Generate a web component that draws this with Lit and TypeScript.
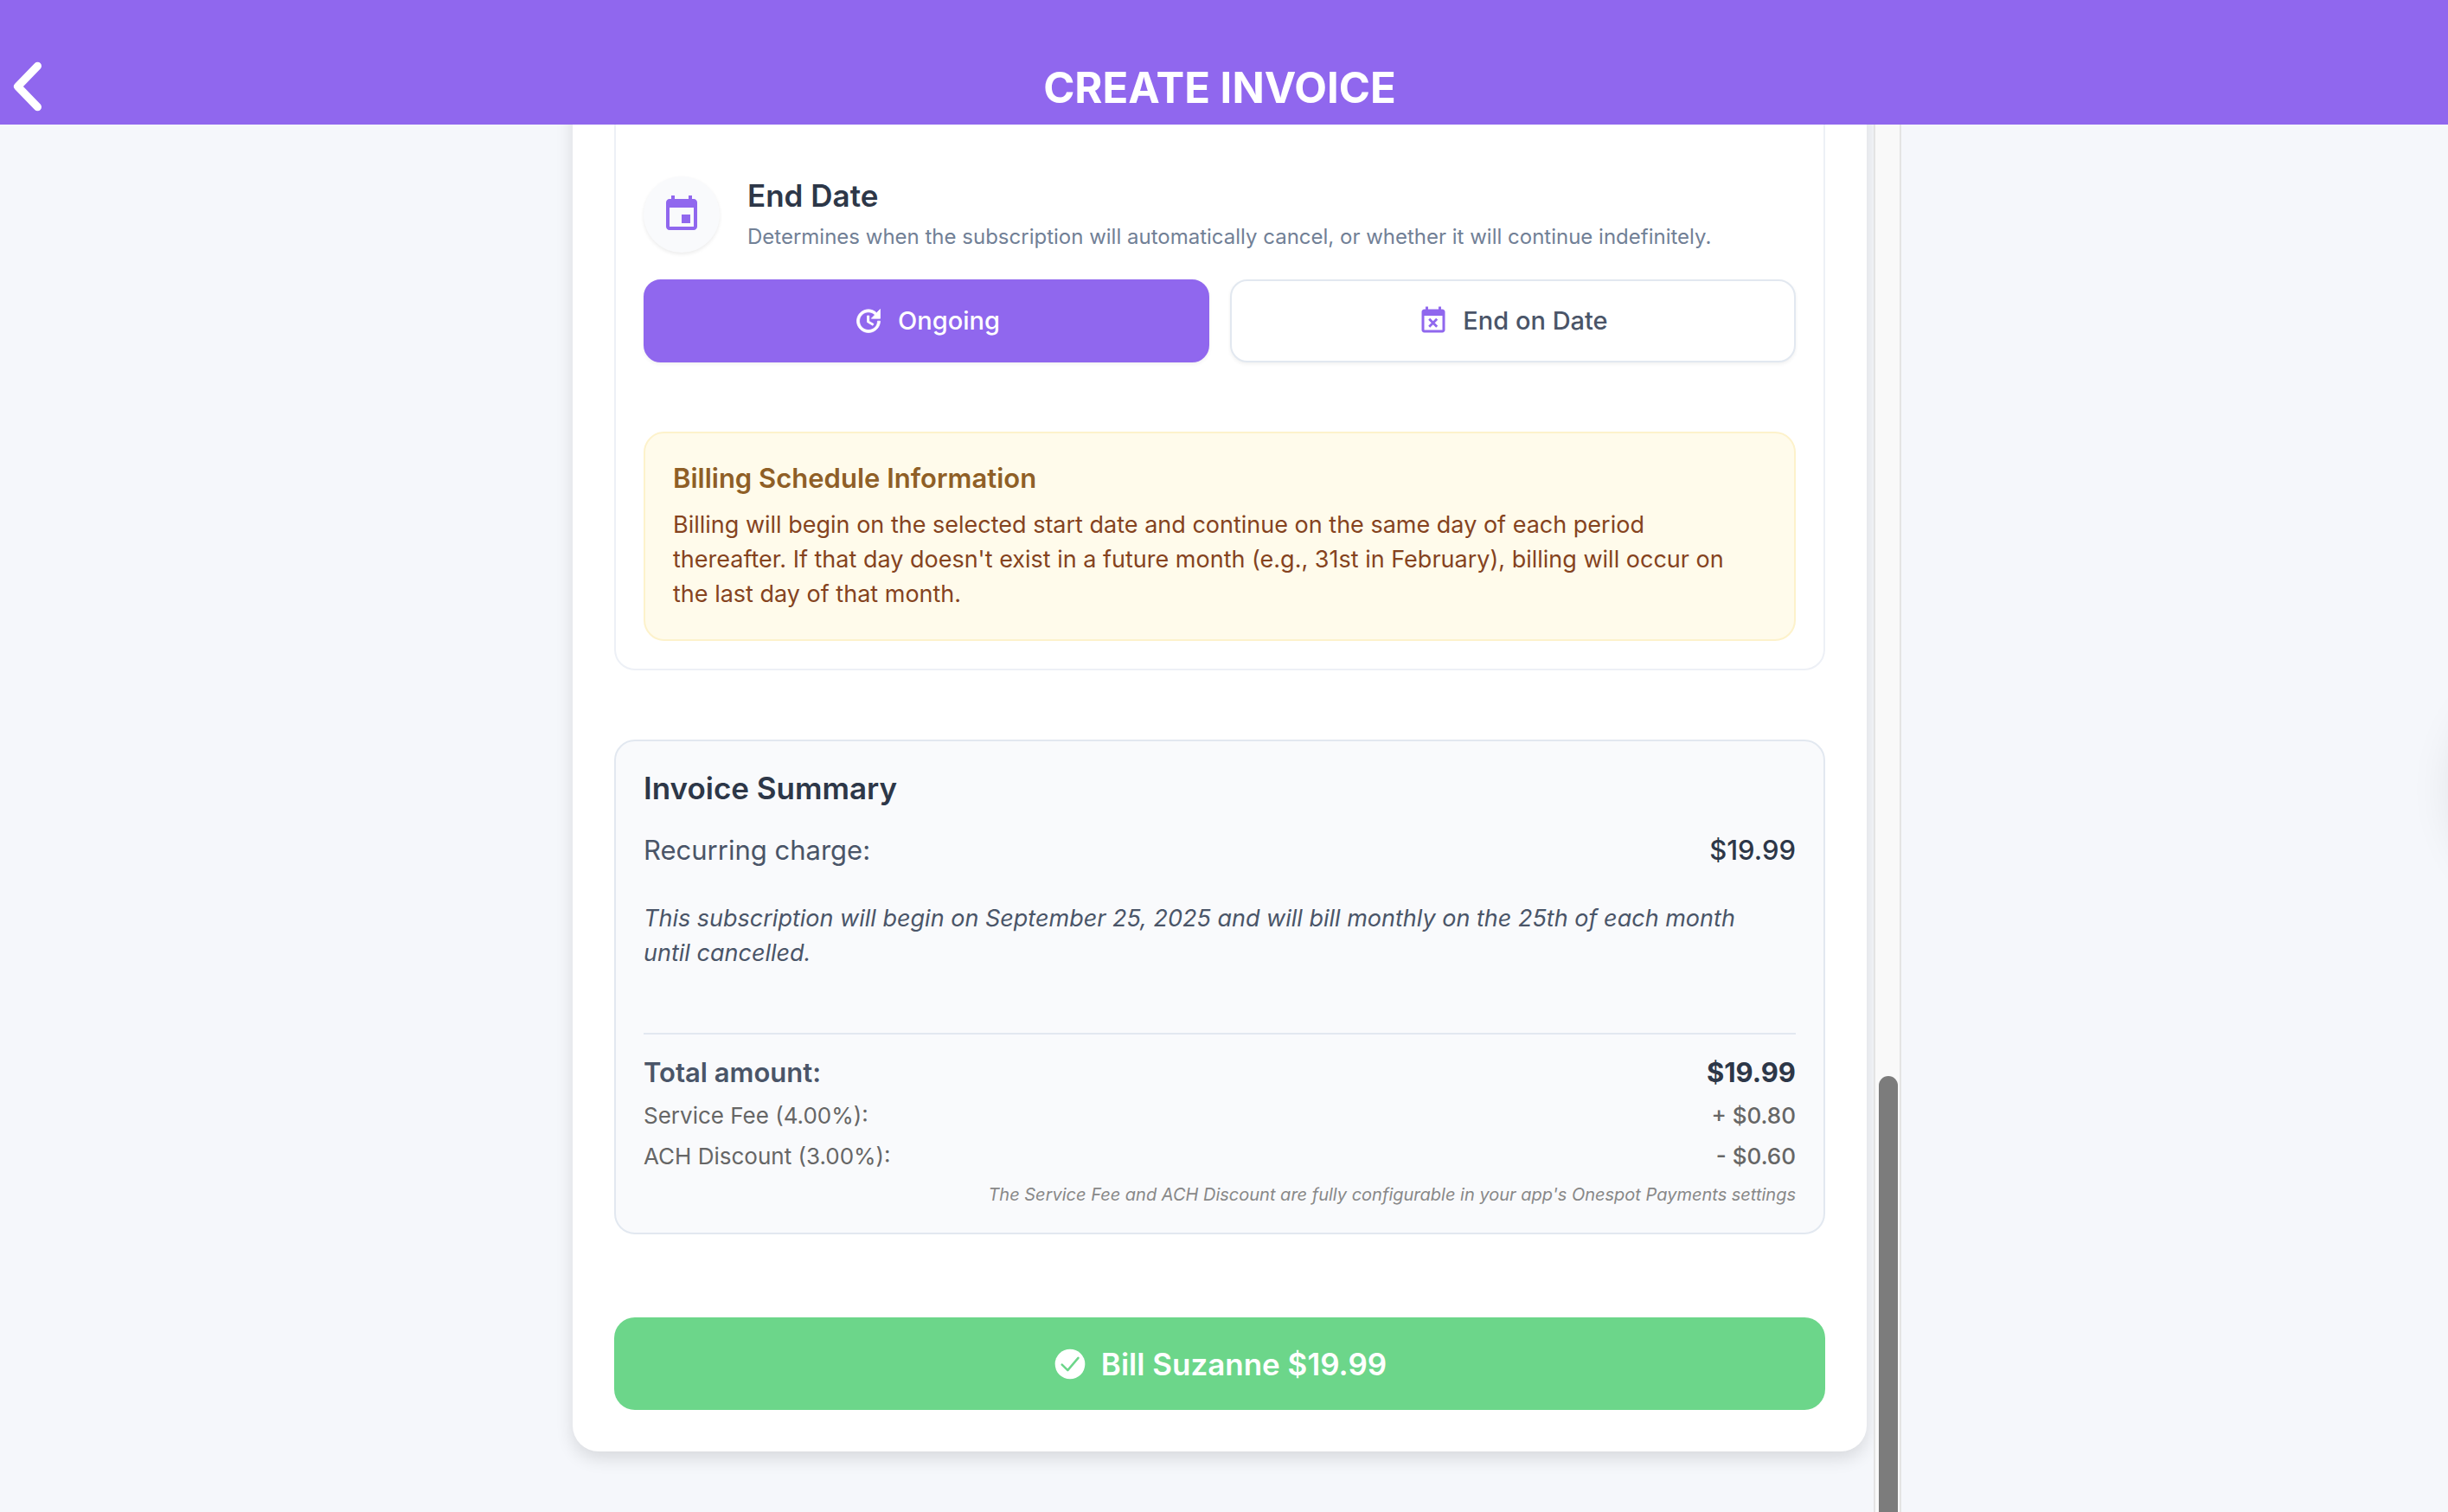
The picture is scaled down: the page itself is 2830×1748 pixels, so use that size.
import { LitElement, html, css, svg } from "lit";
import { customElement, property, state } from "lit/decorators.js";

const ICONS: Record<string, unknown> = {
  event: svg`<path fill="currentColor" d="M17 12h-5v5h5v-5zM16 1v2H8V1H6v2H5c-1.11 0-1.99.9-1.99 2L3 19c0 1.1.89 2 2 2h14c1.1 0 2-.9 2-2V5c0-1.1-.9-2-2-2h-1V1h-2zm3 18H5V8h14v11z"/>`,
  update: svg`<path fill="currentColor" stroke="currentColor" stroke-width=".5" d="M21 10.12h-6.78l2.74-2.82c-2.73-2.7-7.15-2.8-9.88-.1-2.73 2.71-2.73 7.08 0 9.79s7.15 2.71 9.88 0C18.32 15.65 19 14.08 19 12.1h2c0 1.98-.88 4.55-2.64 6.29-3.51 3.48-9.21 3.48-12.72 0-3.5-3.47-3.53-9.11-.02-12.58s9.14-3.47 12.65 0L21 3v7.12zM12.5 8v4.25l3.5 2.08-.72 1.21L11 13V8h1.5z"/>`,
  busy: svg`<path fill="currentColor" d="M19 3h-1V1h-2v2H8V1H6v2H5c-1.11 0-1.99.9-1.99 2L3 19c0 1.1.89 2 2 2h14c1.1 0 2-.9 2-2V5c0-1.1-.9-2-2-2zm0 16H5V8h14v11z"/><path fill="none" stroke="currentColor" stroke-width="1.9" d="M8.8 10.5l6 6M14.8 10.5l-6 6"/>`,
  check: svg`<circle cx="12" cy="12" r="10.4" fill="currentColor"/><path fill="none" stroke="#6cd68a" stroke-width="1.5" stroke-linecap="round" stroke-linejoin="round" d="M6.4 12.4l4 3.9 7.3-8.6"/>`,
  back: svg`<path fill="none" stroke="currentColor" stroke-width="3.6" stroke-linecap="round" stroke-linejoin="round" d="M17.4 2.5L8.2 12l9.2 9.5"/>`,
};

@customElement("ui-icon")
class UiIcon extends LitElement {
  @property() name = "event";

  static styles = css`
    :host {
      display: block;
      flex: none;
      width: 36px;
      height: 36px;
    }
    .glyph {
      display: block;
      width: 100%;
      height: 100%;
    }
  `;

  render() {
    return html`<svg class="glyph" viewBox="0 0 24 24" aria-hidden="true">${ICONS[this.name]}</svg>`;
  }
}

@customElement("app-root")
class AppRoot extends LitElement {
  @state() private ending: "ongoing" | "date" = "ongoing";

  static styles = css`
    :host {
      display: flex;
      flex-direction: column;
      height: 100vh;
      overflow: hidden;
      position: relative;
      background: #f5f7fb;
      color: #2d3748;
      font-family: Inter, "Liberation Sans", sans-serif;
      font-size: 27px;
      line-height: 40px;
    }
    * {
      box-sizing: border-box;
    }
    h1,
    h2,
    h3,
    p,
    dl,
    dd {
      margin: 0;
    }
    button {
      font: inherit;
      cursor: pointer;
    }
    .bar {
      flex: none;
      display: grid;
      grid-template-columns: 64px 1fr 64px;
      align-items: center;
      height: 144px;
      padding: 56px 10px 0 0;
      background: #9067ee;
      color: #fff;
      z-index: 1;
    }
    .back {
      display: flex;
      padding: 0;
      border: 0;
      background: none;
      color: inherit;
    }
    .back ui-icon {
      width: 60px;
      height: 60px;
    }
    .bar h1 {
      padding-top: 4px;
      font-size: 49px;
      line-height: 60px;
      font-weight: 700;
      text-align: center;
    }
    .body {
      flex: 1;
      min-height: 0;
      display: grid;
      grid-template-columns: 1fr minmax(0, 1496px) 1fr;
      grid-template-rows: minmax(0, 1fr);
      padding-right: 10px;
    }
    .card {
      grid-column: 2;
      align-self: start;
      margin-top: -40px;
      padding: 40px 48px 48px;
      border-radius: 0 0 30px 30px;
      background: #fff;
      box-shadow: 0 8px 20px rgba(0, 0, 0, 0.12);
    }
    .schedule {
      padding: 60px 32px 32px;
      border: 2px solid #edf0f6;
      border-top: 0;
      border-radius: 0 0 24px 24px;
    }
    .intro {
      display: flex;
      align-items: center;
      gap: 32px;
    }
    .badge {
      flex: none;
      display: grid;
      place-items: center;
      width: 88px;
      height: 88px;
      border-radius: 50%;
      background: #f9fafc;
      color: #9067ee;
      box-shadow: 0 2px 4px rgba(0, 0, 0, 0.08);
    }
    .badge ui-icon {
      width: 48px;
      height: 48px;
    }
    .heading {
      font-size: 35px;
      line-height: 44px;
      font-weight: 600;
    }
    .hint {
      margin-top: 8px;
      font-size: 24px;
      line-height: 36px;
      color: #718096;
    }
    .choices {
      display: grid;
      grid-template-columns: 1fr 1fr;
      gap: 24px;
      margin-top: 31px;
    }
    .choice {
      display: flex;
      align-items: center;
      justify-content: center;
      gap: 16px;
      height: 96px;
      padding: 0 24px;
      border: 2px solid #e2e8f0;
      border-radius: 20px;
      background: #fff;
      color: #4a5568;
      font-size: 29px;
      font-weight: 500;
      box-shadow: 0 2px 4px rgba(0, 0, 0, 0.06);
    }
    .choice ui-icon {
      color: #9067ee;
    }
    .choice.on,
    .choice.on ui-icon {
      border-color: #9067ee;
      background: #9067ee;
      color: #fff;
    }
    .notice {
      margin-top: 80px;
      padding: 32px;
      border: 2px solid #fdf2cb;
      border-radius: 24px;
      background: #fffbeb;
      color: #85431e;
    }
    .notice h3 {
      margin-bottom: 14px;
      font-size: 31px;
      font-weight: 600;
      color: #8f5f26;
    }
    .notice p,
    .terms {
      padding-right: 20px;
    }
    .summary {
      margin-top: 80px;
      padding: 32px;
      border: 2px solid #e2e8f0;
      border-radius: 24px;
      background: #f9fafc;
    }
    .line {
      display: flex;
      justify-content: space-between;
      font-size: 26px;
      line-height: 40px;
      color: #666;
    }
    .line dd {
      font-weight: 500;
    }
    .line.charge {
      margin-top: 30px;
      font-size: 31px;
      color: #4a5568;
    }
    .line.charge dd,
    .line.total dd {
      color: #2d3748;
    }
    .line.total {
      font-size: 31px;
      line-height: 46px;
      font-weight: 600;
    }
    .line.total dt {
      color: #4a5568;
    }
    .line.total dd {
      font-weight: 700;
    }
    .terms {
      margin-top: 39px;
      font-style: italic;
      color: #4a5568;
    }
    .totals {
      display: grid;
      gap: 7px;
      margin-top: 72px;
      padding-top: 21px;
      border-top: 2px solid #e2e8f0;
    }
    .note {
      margin-top: 12px;
      font-size: 20px;
      line-height: 24px;
      font-style: italic;
      text-align: right;
      color: #888;
    }
    .submit {
      display: flex;
      align-items: center;
      justify-content: center;
      gap: 16px;
      width: 100%;
      height: 107px;
      margin-top: 96px;
      border: 0;
      border-radius: 24px;
      background: #6cd68a;
      color: #fff;
      font-size: 35px;
      font-weight: 600;
    }
    .submit ui-icon {
      width: 40px;
      height: 40px;
    }
    .track {
      grid-column: 3;
      display: flex;
      flex-direction: column;
      justify-content: flex-end;
      width: 32px;
      margin-left: 8px;
      padding: 0 2px 0 4px;
      border: solid #e4e4e4;
      border-width: 0 2px;
      background: #f9f9f9;
      z-index: 1;
    }
    .thumb {
      height: 31.4%;
      border-radius: 11px 11px 0 0;
      background: #7c7c7c;
    }
    .bubble {
      position: absolute;
      top: calc(50% - 92px);
      right: -267px;
      width: 260px;
      height: 260px;
      border-radius: 50%;
      background: #fff;
      box-shadow: 0 0 52px rgba(0, 0, 0, 0.1);
    }
  `;

  render() {
    const on = (v: string) => (this.ending === v ? "choice on" : "choice");
    return html`
      <header class="bar">
        <button class="back" aria-label="Back"><ui-icon name="back"></ui-icon></button>
        <h1>CREATE INVOICE</h1>
      </header>
      <main class="body">
        <div class="card">
          <section class="schedule">
            <div class="intro">
              <div class="badge"><ui-icon name="event"></ui-icon></div>
              <div>
                <h2 class="heading">End Date</h2>
                <p class="hint">Determines when the subscription will automatically cancel, or whether it will continue indefinitely.</p>
              </div>
            </div>
            <div class="choices">
              <button class=${on("ongoing")} @click=${() => (this.ending = "ongoing")}>
                <ui-icon name="update"></ui-icon>Ongoing
              </button>
              <button class=${on("date")} @click=${() => (this.ending = "date")}>
                <ui-icon name="busy"></ui-icon>End on Date
              </button>
            </div>
            <div class="notice">
              <h3>Billing Schedule Information</h3>
              <p>Billing will begin on the selected start date and continue on the same day of each period thereafter. If that day doesn't exist in a future month (e.g., 31st in February), billing will occur on the last day of that month.</p>
            </div>
          </section>
          <section class="summary">
            <h2 class="heading">Invoice Summary</h2>
            <dl>
              <div class="line charge"><dt>Recurring charge:</dt><dd>$19.99</dd></div>
            </dl>
            <p class="terms">This subscription will begin on September 25, 2025 and will bill monthly on the 25th of each month until cancelled.</p>
            <dl class="totals">
              <div class="line total"><dt>Total amount:</dt><dd>$19.99</dd></div>
              <div class="line"><dt>Service Fee (4.00%):</dt><dd>+ $0.80</dd></div>
              <div class="line"><dt>ACH Discount (3.00%):</dt><dd>- $0.60</dd></div>
            </dl>
            <p class="note">The Service Fee and ACH Discount are fully configurable in your app's Onespot Payments settings</p>
          </section>
          <button class="submit"><ui-icon name="check"></ui-icon>Bill Suzanne $19.99</button>
        </div>
        <div class="track"><div class="thumb"></div></div>
      </main>
      <div class="bubble"></div>
    `;
  }
}
